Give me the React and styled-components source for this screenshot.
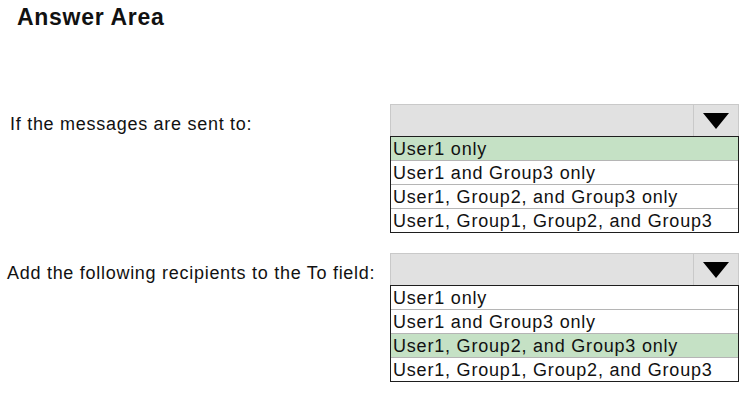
import React from 'react'
import styled, { createGlobalStyle } from 'styled-components'

const GlobalStyle = createGlobalStyle`
  html, body {
    margin: 0;
    padding: 0;
    background: #ffffff;
  }
  body {
    font-family: 'Liberation Sans', Arial, sans-serif;
    color: #111;
  }
`

const Page = styled.div`
  width: 747px;
  height: 395px;
  position: relative;
  overflow: hidden;
`

const Title = styled.h1`
  margin: 0;
  padding: 3px 0 0 17px;
  font-size: 23px;
  font-weight: bold;
  letter-spacing: 0.7px;
  line-height: 28px;
  color: #111;
`

const Section = styled.div`
  display: flex;
  align-items: flex-start;
  margin-top: ${p => p.$top}px;
`

const Label = styled.div`
  width: ${p => 390 - p.$left}px;
  padding-left: ${p => p.$left}px;
  padding-top: ${p => p.$pad}px;
  font-size: 18px;
  letter-spacing: 0.72px;
  line-height: 22px;
  white-space: nowrap;
`

const Dropdown = styled.div`
  width: 349px;
  display: flex;
  flex-direction: column;
`

const Header = styled.div`
  height: 31px;
  display: flex;
  background: #e1e1e1;
  border: 1px solid #c9c9c9;
  border-bottom: none;
`

const HeaderField = styled.div`
  flex: 1;
`

const ArrowBox = styled.div`
  width: 44px;
  border-left: 1px solid #c9c9c9;
  display: flex;
  align-items: center;
  justify-content: center;
`

const Options = styled.ul`
  list-style: none;
  margin: 0;
  padding: 0;
  border: 1px solid #1e1e1e;
`

const Option = styled.li`
  height: 23px;
  padding-left: 2px;
  font-size: 18px;
  letter-spacing: 0.8px;
  line-height: 24px;
  background: ${p => (p.$selected ? '#c5e1c5' : '#ffffff')};
  border-top: ${p => (p.$first ? 'none' : '1px solid #b5b5b5')};
  white-space: nowrap;
  color: #111;
`

const choices = [
  'User1 only',
  'User1 and Group3 only',
  'User1, Group2, and Group3 only',
  'User1, Group1, Group2, and Group3',
]

const Arrow = () => (
  <svg width="28" height="18" viewBox="0 0 28 18">
    <polygon points="1,1 27,1 14,17" fill="#000" />
  </svg>
)

const Question = ({ label, left, top, pad, selected }) => (
  <Section $top={top}>
    <Label $left={left} $pad={pad}>{label}</Label>
    <Dropdown>
      <Header>
        <HeaderField />
        <ArrowBox>
          <Arrow />
        </ArrowBox>
      </Header>
      <Options>
        {choices.map((c, i) => (
          <Option key={c} $first={i === 0} $selected={i === selected}>
            {c}
          </Option>
        ))}
      </Options>
    </Dropdown>
  </Section>
)

export default function App() {
  return (
    <Page>
      <GlobalStyle />
      <Title>Answer Area</Title>
      <Question label="If the messages are sent to:" left={10} top={73} pad={9} selected={0} />
      <Question label="Add the following recipients to the To field:" left={7} top={20} pad={9} selected={2} />
    </Page>
  )
}
